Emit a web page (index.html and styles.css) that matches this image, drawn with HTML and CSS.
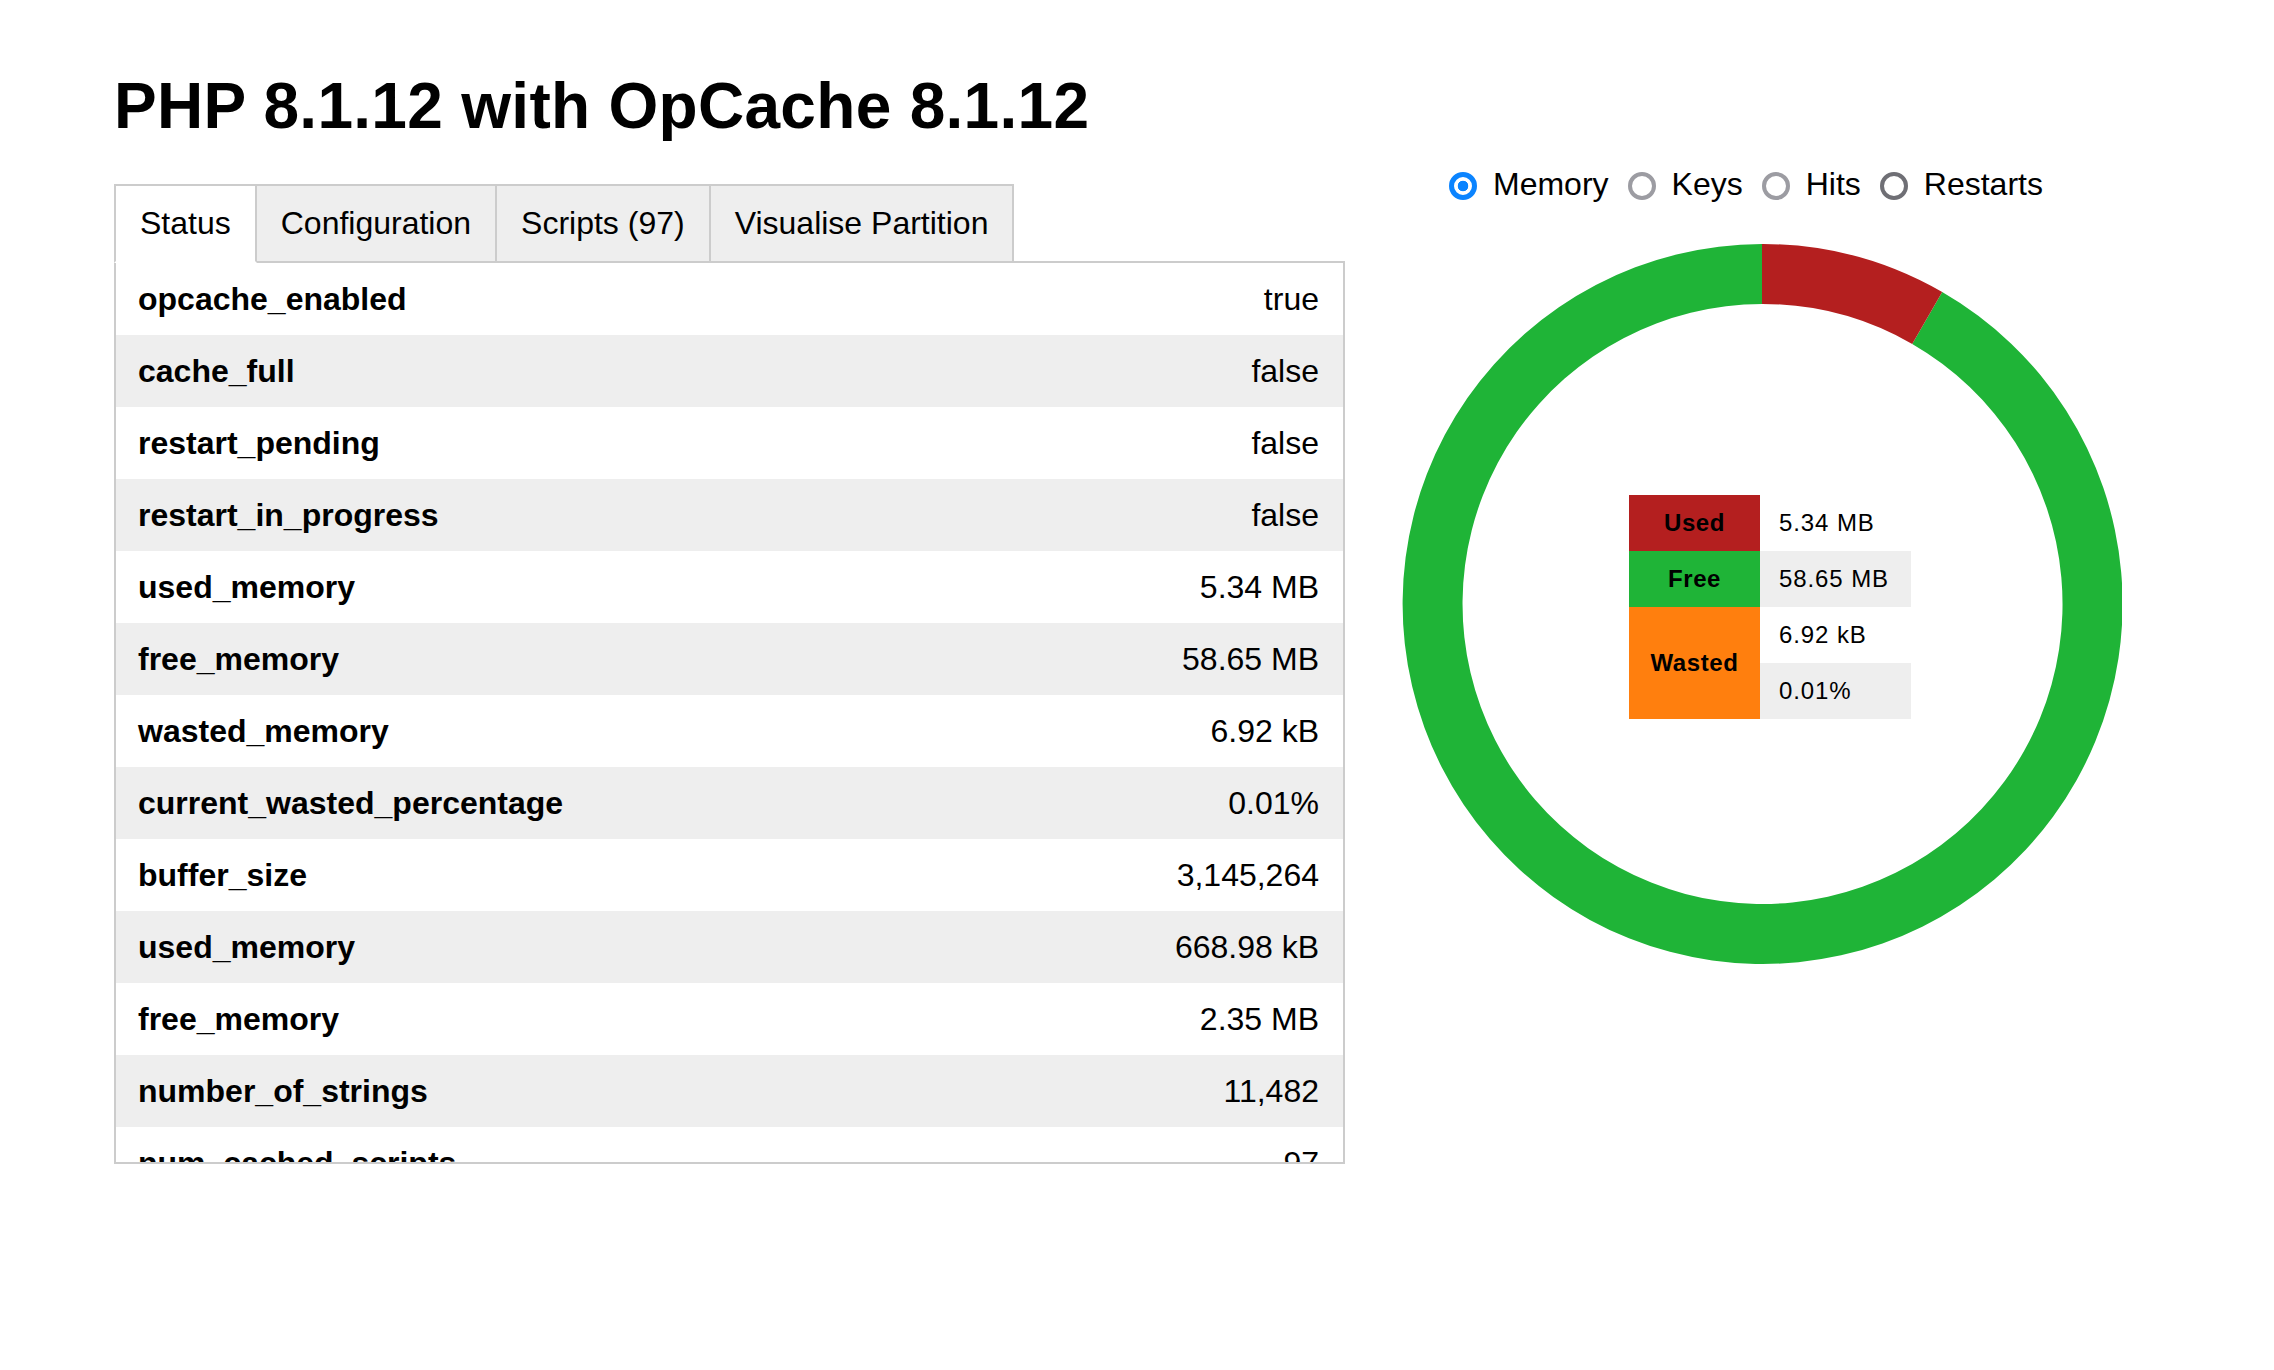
FILE: index.html
```html
<!DOCTYPE html>
<html lang="en">
<head>
<meta charset="utf-8">
<title>OpCache</title>
<link rel="stylesheet" href="styles.css">
</head>
<body>
<div class="page">
  <h1 class="title">PHP 8.1.12 with OpCache 8.1.12</h1>

  <div class="main">
    <div class="tabs">
      <div class="tab active">Status</div>
      <div class="tab">Configuration</div>
      <div class="tab">Scripts (97)</div>
      <div class="tab">Visualise Partition</div>
      <div class="tab-fill"></div>
    </div>
    <div class="panel">
      <table class="status">
        <tr><td class="key">opcache_enabled</td><td class="val">true</td></tr>
        <tr><td class="key">cache_full</td><td class="val">false</td></tr>
        <tr><td class="key">restart_pending</td><td class="val">false</td></tr>
        <tr><td class="key">restart_in_progress</td><td class="val">false</td></tr>
        <tr><td class="key">used_memory</td><td class="val">5.34 MB</td></tr>
        <tr><td class="key">free_memory</td><td class="val">58.65 MB</td></tr>
        <tr><td class="key">wasted_memory</td><td class="val">6.92 kB</td></tr>
        <tr><td class="key">current_wasted_percentage</td><td class="val">0.01%</td></tr>
        <tr><td class="key">buffer_size</td><td class="val">3,145,264</td></tr>
        <tr><td class="key">used_memory</td><td class="val">668.98 kB</td></tr>
        <tr><td class="key">free_memory</td><td class="val">2.35 MB</td></tr>
        <tr><td class="key">number_of_strings</td><td class="val">11,482</td></tr>
        <tr><td class="key">num_cached_scripts</td><td class="val">97</td></tr>
      </table>
    </div>
  </div>

  <div class="side">
    <div class="radios">
      <label class="radio"><span class="dot selected"></span>Memory</label>
      <label class="radio"><span class="dot"></span>Keys</label>
      <label class="radio"><span class="dot"></span>Hits</label>
      <label class="radio"><span class="dot hover"></span>Restarts</label>
    </div>
    <div class="donut">
      <svg class="ring" width="720" height="720" viewBox="-360 -360 720 720">
        <path fill="#1FB437" d="M180.2,-312.0 A360,360 0 1,1 0,-360 L0,-300 A300,300 0 1,0 150.2,-260.0 Z"/>
        <path fill="#B41F1F" d="M0,-360 A360,360 0 0,1 180.2,-312.0 L150.2,-260.0 A300,300 0 0,0 0,-300 Z"/>
      </svg>
      <table class="legend">
        <tr><td class="lab used">Used</td><td class="num">5.34 MB</td></tr>
        <tr><td class="lab free">Free</td><td class="num alt">58.65 MB</td></tr>
        <tr><td class="lab wasted" rowspan="2">Wasted</td><td class="num">6.92 kB</td></tr>
        <tr><td class="num alt">0.01%</td></tr>
      </table>
    </div>
  </div>
</div>
</body>
</html>
```

FILE: styles.css
```css
html, body {
  margin: 0;
  padding: 0;
  background: #fff;
}

body {
  font-family: "Liberation Sans", Arial, Helvetica, sans-serif;
  color: #000;
}

.page {
  display: grid;
  grid-template-columns: 1231px 720px;
  column-gap: 57px;
  padding: 69px 0 0 114px;
}

.title {
  grid-column: 1;
  grid-row: 1;
  margin: 0 0 41px 0;
  font-size: 64px;
  line-height: 74px;
  font-weight: bold;
  letter-spacing: 0.3px;
}

.main {
  grid-column: 1;
  grid-row: 2;
}

.tabs {
  display: flex;
  align-items: stretch;
}

.tab {
  font-size: 32px;
  line-height: 75px;
  padding: 0 24px;
  background: #eee;
  border-top: 2px solid #ccc;
  border-right: 2px solid #ccc;
  border-bottom: 2px solid #ccc;
  white-space: nowrap;
}

.tab:first-child {
  border-left: 2px solid #ccc;
}

.tab.active {
  background: #fff;
  border-bottom-color: #fff;
}

.tab-fill {
  flex: 1;
  border-bottom: 2px solid #ccc;
}

.panel {
  height: 901px;
  box-sizing: border-box;
  border: 2px solid #ccc;
  border-top: none;
  overflow: hidden;
}

.status {
  width: 100%;
  border-collapse: collapse;
  border-spacing: 0;
}

.status td {
  font-size: 32px;
  line-height: 36px;
  padding: 18px 24px 18px 22px;
  white-space: nowrap;
}

.status tr:nth-child(even) td {
  background: #eee;
}

.status .key {
  font-weight: bold;
  text-align: left;
}

.status .val {
  text-align: right;
}

.side {
  grid-column: 2;
  grid-row: 1 / span 2;
  padding-top: 95px;
}

.radios {
  display: flex;
  align-items: center;
  height: 40px;
  padding-left: 47px;
}

.radio {
  display: flex;
  align-items: center;
  gap: 16px;
  margin-right: 19px;
  font-size: 32px;
  line-height: 40px;
}

.dot {
  width: 28px;
  height: 28px;
  box-sizing: border-box;
  border-radius: 50%;
  border: 4px solid #9c9ca2;
  background: #fff;
  position: relative;
  top: 2px;
}

.dot.hover {
  border-color: #6f6f75;
}

.dot.selected {
  border: 5px solid #0b84ff;
  background: radial-gradient(circle, #0b84ff 0 5px, #fff 5.6px);
}

.donut {
  margin-top: 40px;
  display: grid;
  width: 720px;
  height: 720px;
}

.ring {
  grid-area: 1 / 1;
  display: block;
}

.legend {
  grid-area: 1 / 1;
  align-self: center;
  justify-self: center;
  margin: 5px 0 0 16px;
  border-collapse: collapse;
  border-spacing: 0;
}

.legend td {
  height: 56px;
  padding: 0;
  font-size: 24px;
  line-height: 28px;
  box-sizing: border-box;
  letter-spacing: 0.9px;
}

.legend .lab {
  width: 131px;
  text-align: center;
  font-weight: bold;
  letter-spacing: 0.6px;
}

.legend .num {
  width: 151px;
  padding-left: 19px;
  text-align: left;
  background: #fff;
}

.legend .num.alt {
  background: #eee;
}

.legend .used {
  background: #B41F1F;
}

.legend .free {
  background: #1FB437;
}

.legend .wasted {
  background: #ff7f0e;
}
```
